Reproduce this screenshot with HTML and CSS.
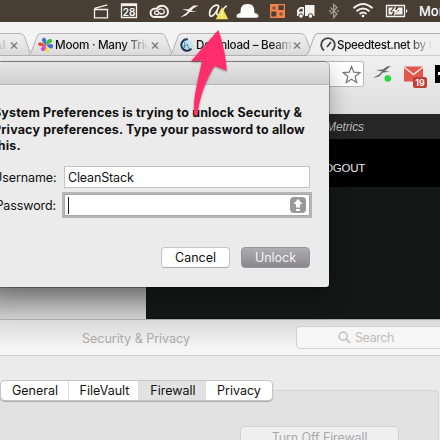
FILE: index.html
```
<!DOCTYPE html>
<html lang="en">
<head>
<meta charset="utf-8">
<title>Desktop</title>
<link rel="stylesheet" href="styles.css">
</head>
<body>
<div class="desktop">
  <header class="menubar">
    <svg width="348" height="22" viewBox="0 0 348 22">
      <g fill="none" stroke="#f3f1ee" stroke-width="1.3">
        <path d="M2.500 9.500h13v8.300h-13zM2.500 8.300l12.800-3.500"/>
        <path d="M29.500 4h15v13.500h-15z"/><path d="M29 5h16" stroke-width="2.200"/>
        <path d="M63 17h8.500a5.300 5.300 0 0 0 4.500-5.300c0-3.300-2.700-5.900-6-5.900-2.400 0-4.300 1.300-5.300 3H62.500a4.200 4.100 0 0 0 .5 8.200z" stroke-width="2"/>
        <path d="M67 14c-2 1-4.500.5-4.500-1.300s2.500-2.200 4-.8l2.500 2.500M65.800 10.400c1.800-2.500 6-1.900 6.500.8.500 2.400-2.300 3.500-4 1.900" stroke-width="1.400"/>
      </g>
      <path d="M88 17.500l6-4.300 2-2.300-6-1.600 6.500-.1 5-3.700 5 .1-5 2.600-2.300 2.600 6 .8-7.500.5-3.700 3.400z" fill="#f3f1ee"/>
      <path d="M127 6c-4-3-9.500 3-9.500 7.500 0 5 5 3.500 9.500-7.500-2 5-4 9 0 9 4 0 3-8 8-9" fill="none" stroke="#f3f1ee" stroke-width="1.600"/>
      <path d="M130 7l6.200 12.300H123.800z" fill="#efe254"/><path d="M130 11v4.600M130 16.700v1.500" stroke="#fff8bd" stroke-width="1.600"/>
      <path d="M148.500 13C148.500 7 150 4 155.500 4s7 3 7 9c3 .5 4.500 2 4 3.500q-.3 1.200-2 1.200h-18q-2 0-2-1.500 0-2.500 4-3.200z" fill="#fff"/>
      <g fill="#f0824d"><path fill-rule="evenodd" d="M178 4h15v14h-15zM186.500 5.300v4.700h5.200V5.300zM179.300 11.500v5h5v-5z"/></g><path d="M180 8h4M182 6v4M187 14h4M189 12v4" stroke="#6d4933" stroke-width="1"/>
      <path d="M213 5h9.500v11H213zM205 10l3-3h4v9h-7z" fill="#f3f1ee"/><path d="M207 10.500l1.800-1.700h1.800v2.700H207z" fill="#483e33"/><g fill="#f3f1ee" stroke="#483e33"><circle cx="209" cy="16" r="2.300"/><circle cx="218.500" cy="16" r="2.300"/></g>
      <path d="M238.500 7.500l6.500 6.500-3.300 3.500V4.500L245 7.500l-6.500 6.500" fill="none" stroke="#a29b92" stroke-width="1.300"/><path d="M237 11h2M245 11h2" stroke="#a29b92" stroke-width="1.500"/>
      <g fill="none" stroke="#f3f1ee" stroke-width="2"><path d="M261.500 8.300q9.500-8.500 19 0M264.500 11.200q6.500-5.500 13 0M267.500 14q3.500-3 7 0"/></g><circle cx="271" cy="16" r="1.300" fill="#fff"/>
      <path d="M294.500 5.500h18v11h-18z" fill="none" stroke="#f3f1ee" stroke-width="1.300"/><path d="M296.500 7.500h4.500l-3 4.500h3l-1 2.500h-3.500zM306 7.500h4.500v7H303l4.500-4.500H305z" fill="#f3f1ee"/><path d="M304 5.500l-4.500 6h3.200l-1.200 5.500 5-7h-3.200z" fill="#f3f1ee"/><path d="M314 9q3 2 0 4z" fill="#f3f1ee"/>
      <text class="calendar-day" x="37" y="15.800" text-anchor="middle">28</text>
    </svg>
    <span class="clock">Mon</span>
  </header>

  <section class="browser">
    <div class="tabstrip">
      <svg class="tab-shapes" width="440" height="34" viewBox="0 0 440 34">
        <defs><linearGradient id="tab" x2="0" y2="1"><stop stop-color="#eee"/><stop offset="1" stop-color="#dedede"/></linearGradient></defs>
        <g fill="url(#tab)" stroke="#b4b4b4"><path d="M-10 33.500V11.500H20q3 0 4.500 3l5.500 16q1 2 3 3z"/><path d="M28 33.500q2-1 3-3l6-16q1-3 4-3H161q3 0 4.500 3l6 16q1 2 3 3z"/><path d="M169 33.500q2-1 3-3l6-16q1-3 4-3H301q3 0 4.500 3l6 16q1 2 3 3z"/></g>
        <path d="M304 34q4-1 5-5l5-14q1-3.500 4-3.500H445V34z" fill="#f0f0f0" stroke="#adadad"/>
      </svg>
      <div class="tab tab-first"><span class="faded">AI</span><i class="close">×</i></div>
      <div class="tab tab-moom">
        <svg width="16" height="16" viewBox="0 0 16 16"><path d="M8 8Q2 4 5 1q4-2 3 7" fill="#3971d3"/><path d="M8 8q0-7 5-6 4 3-5 6" fill="#46b83a"/><path d="M8 8q8-3 7 2-1 4-7-2" fill="#4967dc"/><path d="M8 8q6 6 1 7-4 0-1-7" fill="#f4e335"/><path d="M8 8q0 7-4 6-4-3 4-6" fill="#d14bdb"/><path d="M8 8Q1 11 0 7q1-4 8 1" fill="#e84d35"/></svg>
        <span class="moom-title">Moom · Many Tric</span><i class="close">×</i>
      </div>
      <div class="tab tab-beam">
        <svg width="14" height="14" viewBox="0 0 14 14"><circle cx="7" cy="7" r="5.700" fill="#bfe5ef" stroke="#1d3559" stroke-width="2" stroke-dasharray="23 13" transform="rotate(40 7 7)"/><path d="M5 4l-1 6 3-4 2 5" fill="none" stroke="#5d809b"/></svg>
        <span class="beam-title">Download – Beam</span><i class="close">×</i>
      </div>
      <div class="tab tab-speed">
        <svg width="16" height="16" viewBox="0 0 16 16"><path d="M4 13.500a6.800 6.800 0 1 1 8 0M7 10l4-5" fill="none" stroke="#444" stroke-width="1.800"/></svg>
        <span class="speed-title">Speedtest.net by G</span><i class="close">×</i>
      </div>
    </div>
    <div class="toolbar">
      <div class="address"><svg width="19" height="19" viewBox="0 0 18 18"><path d="M9 1.500l2.200 5.300 5.700.4-4.400 3.700 1.400 5.600L9 13.500l-4.900 3 1.400-5.600-4.400-3.700 5.700-.4z" fill="#fff" stroke="#777" stroke-width="1.200"/></svg></div>
      <svg class="extensions" width="68" height="28" viewBox="0 0 68 28">
        <path d="M1 16l6-3.500 3-3-6-1.500 7-.5 4-3 4-.5-4 3-2 2 5 .7-7 .8-4 4z" fill="#666"/><circle cx="15.800" cy="16.500" r="3.300" fill="#2bd646"/>
        <path d="M32 4.500h19v15H32z" fill="#e2574b"/><path d="M32 5l9.500 7.500L51 5" fill="none" stroke="#f8e8e5" stroke-width="1.500"/><rect x="41" y="15" width="14" height="11" rx="2" fill="#bf4038"/><text class="mail-count" x="48" y="23.800" text-anchor="middle">19</text>
        <path d="M63 3h8v18h-8z" fill="#000"/><path d="M66 11.500h2" stroke="#fff" stroke-width="3"/>
      </svg>
    </div>
    <div class="page">
      <aside class="page-side"></aside>
      <main class="page-main"><div class="metrics">Metrics</div><div class="logout">LOGOUT</div><div class="content"></div></main>
    </div>
  </section>

  <section class="settings">
    <div class="settings-title"><span class="settings-name">Security &amp; Privacy</span>
      <div class="search"><svg width="13" height="13" viewBox="0 0 13 13"><circle cx="5.200" cy="5.200" r="4" fill="none" stroke="#b7b7b7" stroke-width="1.300"/><path d="M8.300 8.300l3.700 3.700" stroke="#b7b7b7" stroke-width="1.500"/></svg><span>Search</span></div>
    </div>
    <div class="settings-body">
      <nav class="segments"><span class="general">General</span><span class="filevault">FileVault</span><span class="firewall">Firewall</span><span class="privacy">Privacy</span></nav>
      <div class="group"><button class="turn-off">Turn Off Firewall</button></div>
    </div>
  </section>

  <section class="dialog">
    <div class="dialog-title"></div>
    <div class="dialog-body">
      <div class="message"><p>System Preferences is trying to unlock Security &amp;</p><p>Privacy preferences. Type your password to allow</p><p>this.</p></div>
      <div class="row"><label>Username:</label><div class="field">CleanStack</div></div>
      <div class="row password-row"><label>Password:</label><div class="field focused"><i class="caret"></i><svg width="16" height="16" viewBox="0 0 16 16"><rect width="16" height="16" rx="4" fill="#999"/><path d="M8 2l4.500 5H10v3.500H6V7H3.500zM6 12h4v2H6z" fill="#fff"/></svg></div></div>
      <div class="actions"><button class="cancel">Cancel</button><button class="unlock">Unlock</button></div>
    </div>
  </section>
  <svg class="pointer" width="44" height="94" viewBox="188 27 44 94"><path d="M218.300 30L191 61.300 202 60.500C199 78 193 95 194 114Q195 118 197.500 114C200 95 206 80 214.500 66L226.800 70.800Q225 48 218.300 30z" fill="#ff2d6c"/></svg>
</div>
</body>
</html>
```
FILE: styles.css
```
* { box-sizing: border-box; }
body { margin: 0; font-family: Inter, Roboto, sans-serif; font-size: 12.5px; color: #111; }
p { margin: 0; }
i { font-style: normal; }
button { font: inherit; padding: 0; }
svg { display: block; flex: none; }
.desktop { position: relative; width: 440px; height: 440px; overflow: hidden; background: #f4f4f4; }
.menubar { height: 22px; background: #483e33; display: flex; padding-left: 92px; align-items: center; color: #fff; overflow: hidden; }
.clock { margin-left: -21px; font-size: 13px; font-weight: 500; flex: none; }
.calendar-day { font-size: 10px; font-weight: 600; fill: #fff; }
.browser { height: 297px; }
.tabstrip { position: relative; height: 34px; display: flex; background: #f4f4f4; overflow: hidden; }
.tab-shapes { position: absolute; left: 0; top: 0; }
.tab { position: relative; display: flex; flex: none; align-items: center; height: 22px; margin-top: 12px; white-space: nowrap; font-size: 12px; }
.tab-first { width: 38px; }
.tab-moom { width: 142px; }
.tab-beam { width: 140px; }
.tab-speed { width: 125px; }
.tab span { display: block; flex: none; overflow: hidden; margin-right: auto; height: 16px; line-height: 16px; }
.tab .faded { width: 8px; color: #bbb; text-indent: -6px; }
.tab .close { flex: none; font-size: 15px; line-height: 20px; color: #777; width: 10px; text-align: center; }
.tab-first .close { margin-right: 19px; }
.tab-moom .close { margin-right: 20px; }
.tab-beam .close { margin-right: 18px; }
.tab-speed .close { margin-right: -9px; }
.tab .moom-title { width: 91px; margin-left: 1px; font-size: 11.7px; letter-spacing: -.28px; font-weight: 500; background: linear-gradient(90deg, #111 74%, #ccc 100%); color: transparent; background-clip: text; }
.tab .beam-title { width: 95px; margin-left: 2px; font-size: 11.6px; letter-spacing: -.22px; background: linear-gradient(90deg, #111 80%, #ccc 100%); color: transparent; background-clip: text; font-weight: 500; }
.tab .speed-title { width: 94px; margin-left: 1px; font-size: 11.6px; letter-spacing: -.35px; background: linear-gradient(90deg, #111 74%, #ddd 100%); color: transparent; background-clip: text; font-weight: 500; }
.toolbar { height: 58px; padding-top: 5px; display: flex; background: linear-gradient(#f0f0f0, #dedede); }
.address { width: 365px; height: 26px; background: #fff; border: 1px solid #b8b8b8; border-radius: 2px; display: flex; justify-content: flex-end; align-items: center; padding-right: 2px; }
.extensions { margin: 1px 0 0 8px; }
.mail-count { fill: #fff; font-size: 9px; font-weight: 600; }
.page { display: flex; height: 205px; }
.page-side { width: 146px; background: linear-gradient(#9c9c9c 84%, #cfcfcf); }
.page-main { flex: 1; color: #bbb; }
.metrics { height: 25px; background: #262626; padding: 6px 0 0 180px; font: italic 12px/14px "Liberation Sans", sans-serif; letter-spacing: -.1px; }
.logout { height: 48px; background: #000; padding: 22px 0 0 172px; font: 11.5px/15px "Liberation Sans", sans-serif; color: #eee; letter-spacing: -.25px; }
.content { height: 132px; background: #151716; }
.settings { position: relative; height: 121px; background: #ebebeb; }
.settings-title { height: 37px; display: flex; background: linear-gradient(#dadada, #f6f6f6 85%); border-bottom: 1px solid #cecece; border-top: 1px solid #aaa; overflow: hidden; }
.settings-name { flex: none; width: 213px; margin-left: 82px; padding-top: 11px; line-height: 16px; color: #aaa; white-space: nowrap; }
.search { flex: none; width: 160px; height: 23px; margin: 6px 0 0 1px; border: 1px solid #d0d0d0; border-radius: 4px; background: #f6f6f6; display: flex; align-items: center; gap: 4px; padding-left: 41px; color: #bdbdbd; letter-spacing: -.4px; }
.settings-body { padding-top: 24px; }
.segments { position: relative; z-index: 1; width: 271px; height: 19px; display: flex; margin: 1px 0 0 1px; border-radius: 4px; background: #fff; box-shadow: 0 0 0 1px #c6c6c6, 0 1px 1px 1px #aaa; }
.segments span { text-align: center; line-height: 19px; border-right: 1px solid #dedede; }
.segments .general { width: 68px; padding-left: 1px; }
.segments .filevault { width: 70px; padding-left: 2px; }
.segments .firewall { width: 67px; padding-left: 2px; background: #e2e2e2; }
.segments .privacy { width: 66px; border: 0; }
.group { width: 450px; height: 70px; margin: -10px 0 0 -11px; border: 1px solid #d5d5d5; border-radius: 4px; background: #e2e2e2; padding: 35px 0 0 250px; }
.turn-off { display: block; width: 159px; height: 22px; border: 1px solid #d1d1d1; border-radius: 4px; background: #efefef; color: #aaa; line-height: 17px; letter-spacing: -.1px; }
.dialog { position: absolute; left: -10px; top: 62px; width: 339px; height: 225px; background: #ebebeb; border-radius: 5px 5px 3px 3px; box-shadow: 0 0 0 1px rgba(0,0,0,.3), 0 10px 24px rgba(0,0,0,.3); }
.dialog-title { height: 23px; background: linear-gradient(#e6e6e6, #d0d0d0); border-bottom: 1px solid #b8b8b8; border-radius: 5px 5px 0 0; }
.dialog-body { padding-left: 3px; }
.message { padding-top: 20px; height: 79px; white-space: nowrap; line-height: 16.5px; font-weight: 700; letter-spacing: .16px; }
.row { display: flex; align-items: center; height: 22px; margin-top: 2px; }
.row label { width: 63px; flex: none; text-align: right; margin-right: 8px; white-space: nowrap; letter-spacing: -.1px; }
.field { width: 246px; height: 22px; border: 1px solid #c4c4c4; background: #fff; display: flex; align-items: center; padding: 1px 2px 0 3px; letter-spacing: -.15px; }
.password-row { margin-top: 6px; }
.focused { justify-content: space-between; padding: 0 3px; box-shadow: 0 0 0 2px #b5b5b5; border-color: #a9a9a9; }
.caret { width: 1px; height: 17px; background: #222; }
.actions { display: flex; gap: 11px; margin: 31px 0 0 168px; }
.actions button { height: 21px; line-height: 19px; border-radius: 4px; }
.cancel { width: 69px; color: #111; border: 1px solid #c5c5c5; border-bottom-color: #aaa; background: #fff; }
.unlock { width: 69px; color: #f3f3f3; border: 1px solid #96959a; background: linear-gradient(#aeadb1, #89888d); }
.pointer { position: absolute; left: 188px; top: 27px; filter: drop-shadow(0 1px 1px rgba(0,0,0,.4)); }
```
